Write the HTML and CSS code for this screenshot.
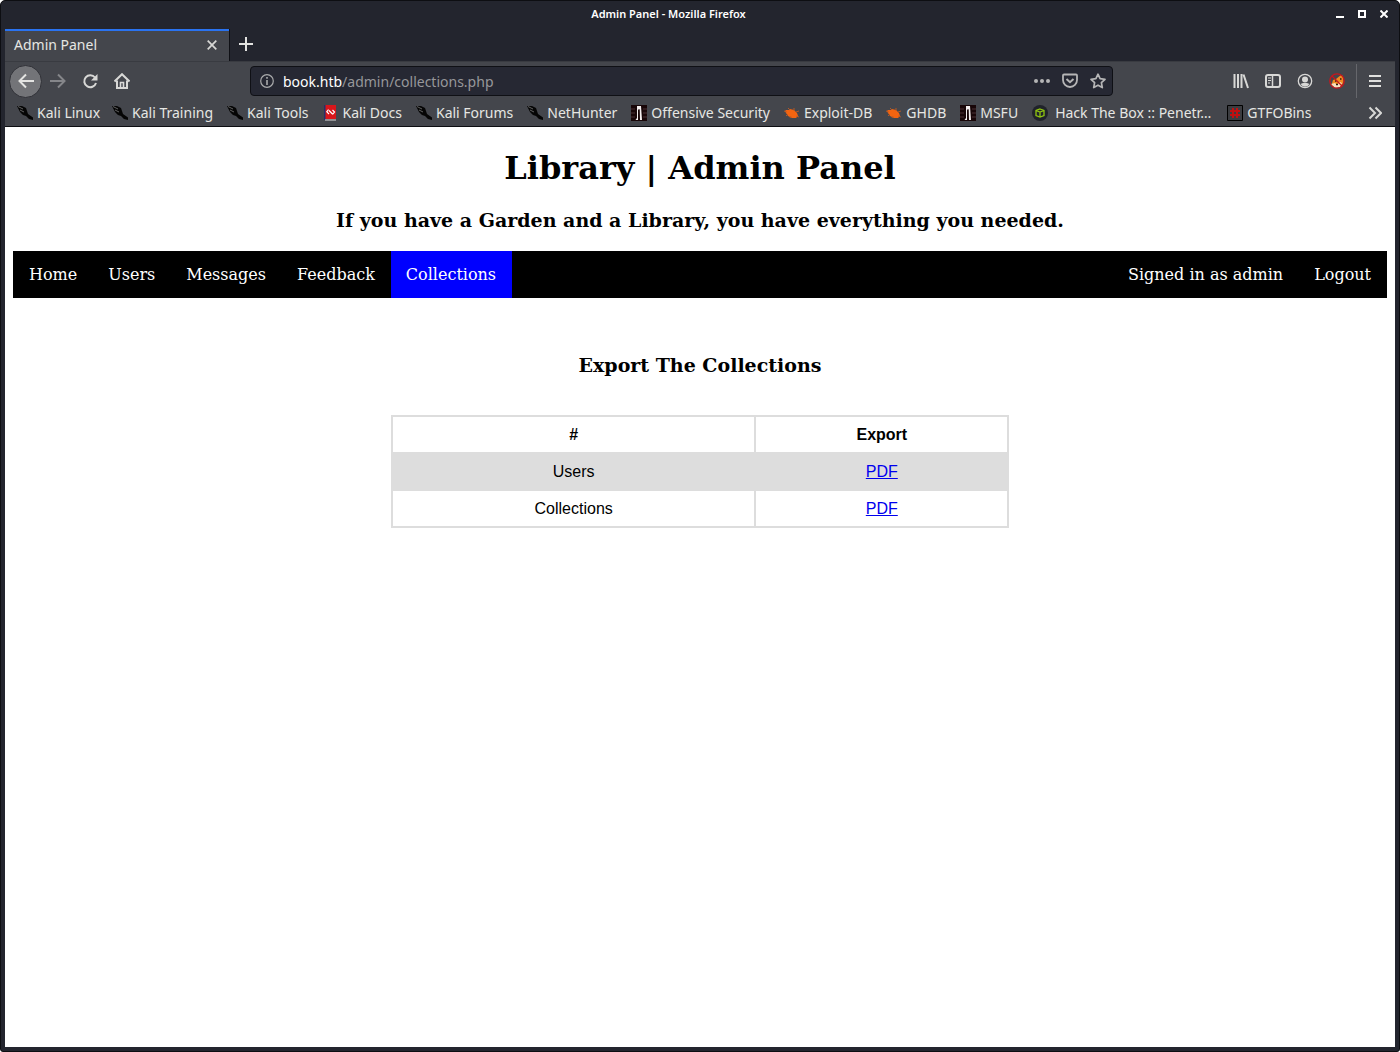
FILE: index.html
```html
<!DOCTYPE html>
<html lang="en">
<head>
<meta charset="utf-8">
<title>Admin Panel</title>
<link rel="stylesheet" href="styles.css">
</head>
<body>
<svg class="defs" aria-hidden="true">
  <symbol id="kali" viewBox="0 0 16 16"><path d="M0 1l5 0 4 2 1 3 1 3 5 3.500V15l-4-1-3-3-3-1-3-3z" fill="#050505"/><path d="M1 1.500l5 2.500M3 5l4 2" stroke="#8a8a8a" stroke-width=".7"/></symbol>
  <symbol id="docs" viewBox="0 0 16 16"><path d="M2 0h2v15H2z" fill="#26306b"/><path d="M3.500 0H14v14H3.500z" fill="#d9161b"/><path d="M3 14.500h11v1H3z" fill="#ddd"/><path d="M6.500 4.500L4.800 6.800 7 9M10.500 5l2 2-2 2.500M7 5.500l3.500 3.500" fill="none" stroke="#fff" stroke-width="1.200"/></symbol>
  <symbol id="offsec" viewBox="0 0 16 16"><path d="M0 0h16v16H0z" fill="#180608"/><path d="M0 4h4M0 8h4M0 12h4M12 4h4M12 8h4M12 12h4" stroke="#4a3034"/><path d="M6 1h4l1 14H9L8.500 5 7 5v10H4.500l1.500-2z" fill="#f4eeee"/><path d="M7.500 4h1v11h-1z" fill="#180608"/></symbol>
  <symbol id="bug" viewBox="0 0 16 16"><path d="M1 6l1-1 3 0 1-1 4 1 3 3 1 3-2 2-4 0-4-2-2-3z" fill="#f36410"/><path d="M4 3l2 2M10 3l0 3M12 7l3-1M3 7L0 6M4 9l-2 2M7 11l-1 2M12 11l3 1" stroke="#c05a22" stroke-width=".9"/></symbol>
  <symbol id="htb" viewBox="0 0 16 16"><circle cx="8" cy="8" r="8" fill="#20232a"/><path d="M8 4l4 1.500v5L8 12l-4-1.500v-5zM4 5.500L8 7l4-1.500M8 7v5" fill="none" stroke="#8fc411" stroke-width="1.300"/></symbol>
  <symbol id="gtfo" viewBox="0 0 16 16"><path d="M.5.5h15v15H.5z" fill="#3b3c40" stroke="#000"/><path d="M6 3v10M10 3v10M3 6h10M3 10h10" stroke="#c01010" stroke-width="2"/></symbol>
</svg>
<div class="window">
  <header class="titlebar">
    <span class="caption">Admin Panel - Mozilla Firefox</span>
    <div class="controls">
      <button aria-label="Minimize"><svg width="8" height="8"><path d="M0 6h8v2H0z" fill="#fff"/></svg></button>
      <button aria-label="Maximize"><svg width="8" height="8"><path d="M1 1h6v6H1z" fill="none" stroke="#fff" stroke-width="2"/></svg></button>
      <button aria-label="Close window"><svg width="8" height="8"><path d="M.5.5l7 7M7.500.5l-7 7" stroke="#fff" stroke-width="2"/></svg></button>
    </div>
  </header>
  <div class="tabs">
    <div class="tab"><span>Admin Panel</span><button aria-label="Close tab"><svg width="10" height="10"><path d="M.7.700l8.600 8.600M9.300.700L.700 9.300" stroke="#d8d8d6" stroke-width="1.700"/></svg></button></div>
    <button class="newtab" aria-label="New tab"><svg width="14" height="14"><path d="M7 0v14M0 7h14" stroke="#e2e2e0" stroke-width="2"/></svg></button>
  </div>
  <div class="toolbar">
    <div class="history">
      <button class="back" aria-label="Back"><svg width="16" height="16"><path d="M16 8H1.500M8 1.500L1.500 8 8 14.500" fill="none" stroke="#e4e4e2" stroke-width="2"/></svg></button>
      <button aria-label="Forward"><svg width="16" height="16"><path d="M0 8h14.500M8 1.500L14.500 8 8 14.500" fill="none" stroke="#85868a" stroke-width="2"/></svg></button>
      <button aria-label="Reload"><svg width="16" height="16"><path d="M13 4.500A6 6 0 1 0 14 10" fill="none" stroke="#d8d8d6" stroke-width="2"/><path d="M15.500 1v6.500H9z" fill="#d8d8d6"/></svg></button>
      <button aria-label="Home"><svg width="16" height="16"><path d="M.5 8.500L8 1.200l7.500 7.300" fill="none" stroke="#d8d8d6" stroke-width="2"/><path d="M3 7.500V15h10V7.500" fill="none" stroke="#d8d8d6" stroke-width="2"/><path d="M6.500 15V9.500h3V15" fill="none" stroke="#d8d8d6" stroke-width="1.600"/></svg></button>
    </div>
    <div class="urlbar">
      <svg width="14" height="14"><circle cx="7" cy="7" r="6.300" fill="none" stroke="#aaabac" stroke-width="1.200"/><path d="M6.200 6h1.600v5H6.200zM6.200 3h1.600v1.700H6.200z" fill="#aaabac"/></svg>
      <span class="address"><b>book.htb</b>/admin/collections.php</span>
      <button aria-label="Page actions"><svg width="16" height="16"><g fill="#b5b5b6"><circle cx="2" cy="8" r="2"/><circle cx="8" cy="8" r="2"/><circle cx="14" cy="8" r="2"/></g></svg></button>
      <button aria-label="Save to Pocket"><svg width="16" height="16"><path d="M2 1.500h12q1 0 1 1V7a7 7 0 0 1-14 0V2.500q0-1 1-1z" fill="none" stroke="#b5b5b6" stroke-width="1.800"/><path d="M4.500 6L8 9.200 11.500 6" fill="none" stroke="#b5b5b6" stroke-width="2"/></svg></button>
      <button aria-label="Bookmark this page"><svg width="16" height="16"><path d="M8 1.200l2.100 4.500 4.900.600-3.600 3.400.900 4.900L8 12.200l-4.300 2.400.900-4.900L1 6.300l4.900-.600z" fill="none" stroke="#b5b5b6" stroke-width="1.700" stroke-linejoin="round"/></svg></button>
    </div>
    <div class="tools">
      <button aria-label="Library"><svg width="16" height="16"><path d="M1.500 1v14M5 1v14M8.500 1v14M10.500 1.500L15 15" stroke="#d8d8d6" stroke-width="2"/></svg></button>
      <button aria-label="Sidebars"><svg width="16" height="16"><rect x="1" y="2" width="14" height="12" rx="2" fill="none" stroke="#d8d8d6" stroke-width="2"/><path d="M7.500 2v12" stroke="#d8d8d6" stroke-width="1.500"/><path d="M3 5h3M3 7.500h3M3 10h2" stroke="#d8d8d6"/></svg></button>
      <button aria-label="Account"><svg width="16" height="16"><circle cx="8" cy="8" r="6.700" fill="none" stroke="#d8d8d6" stroke-width="1.300"/><circle cx="8" cy="6.500" r="3" fill="#d8d8d6"/><path d="M3.500 11q2-1 3-1h3q1 0 3 1-1.500 2.700-4.500 2.700T3.500 11z" fill="#d8d8d6"/></svg></button>
      <button aria-label="FoxyProxy"><svg width="16" height="16"><path d="M4 7l3-1 5-4 2 1 .5 6-2 4-5 1.500-5-2.500z" fill="#f08a20"/><path d="M2 11l4-1 2 2 3-3 2 1-2 4-5 1z" fill="#f5e1c0"/><path d="M6 8h1.500M11 6h1.500M7 11.500h2" stroke="#301a10" stroke-width="1.500"/><circle cx="8" cy="8" r="7.200" fill="none" stroke="#c9151c" stroke-width="1.300"/><path d="M3 3l10 10" stroke="#c9151c" stroke-width="1.300"/></svg></button>
      <button class="menu" aria-label="Menu"><svg width="16" height="16"><path d="M2 3h12M2 8h12M2 13h12" stroke="#e0e0de" stroke-width="2"/></svg></button>
    </div>
  </div>
  <nav class="bookmarks" aria-label="Bookmarks">
    <a href="#"><svg><use href="#kali"/></svg>Kali Linux</a>
    <a href="#"><svg><use href="#kali"/></svg>Kali Training</a>
    <a href="#"><svg><use href="#kali"/></svg>Kali Tools</a>
    <a href="#"><svg><use href="#docs"/></svg>Kali Docs</a>
    <a href="#"><svg><use href="#kali"/></svg>Kali Forums</a>
    <a href="#"><svg><use href="#kali"/></svg>NetHunter</a>
    <a href="#"><svg><use href="#offsec"/></svg>Offensive Security</a>
    <a href="#"><svg><use href="#bug"/></svg>Exploit-DB</a>
    <a href="#"><svg><use href="#bug"/></svg>GHDB</a>
    <a href="#"><svg><use href="#offsec"/></svg>MSFU</a>
    <a href="#" class="truncated"><svg><use href="#htb"/></svg>Hack The Box :: Penetr…</a>
    <a href="#"><svg><use href="#gtfo"/></svg>GTFOBins</a>
    <button aria-label="More bookmarks"><svg width="14" height="14"><path d="M1.500 1.500L7 7l-5.500 5.500M7.500 1.500L13 7l-5.500 5.500" fill="none" stroke="#d8d8d6" stroke-width="2"/></svg></button>
  </nav>
  <main class="page">
    <h1>Library | Admin Panel</h1>
    <h3>If you have a Garden and a Library, you have everything you needed.</h3>
    <nav class="menubar" aria-label="Library">
      <a href="#">Home</a>
      <a href="#">Users</a>
      <a href="#">Messages</a>
      <a href="#">Feedback</a>
      <a href="#" class="active">Collections</a>
      <a href="#" class="account">Signed in as admin</a>
      <a href="#">Logout</a>
    </nav>
    <h3 class="section">Export The Collections</h3>
    <table>
      <thead><tr><th class="name">#</th><th>Export</th></tr></thead>
      <tbody>
        <tr><td>Users</td><td><a href="#">PDF</a></td></tr>
        <tr><td>Collections</td><td><a href="#">PDF</a></td></tr>
      </tbody>
    </table>
  </main>
</div>
</body>
</html>
```
FILE: styles.css
```css
* { box-sizing: border-box; }
body { margin: 0; background: #fff; }
.defs { position: absolute; width: 0; height: 0; }
button {
  display: flex; align-items: center; justify-content: center;
  padding: 0; border: 0; background: none;
}
svg { display: block; flex: none; }

.window {
  display: flex; flex-direction: column;
  min-height: 100vh;
  padding: 0 4px 4px;
  border: 1px solid #0d0e12;
  border-radius: 5px 5px 3px 3px;
  background: #23252e;
  font-family: "Noto Sans", sans-serif;
  font-size: 14px;
  color: #e6e6e3;
}
.titlebar {
  display: grid; grid-template-columns: 1fr auto 1fr;
  align-items: center;
  height: 28px;
  padding: 0 7px 3px 0;
}
.caption { grid-column: 2; padding-right: 56px; font-size: 11px; font-weight: 600; color: #fff; }
.controls { display: flex; justify-content: flex-end; gap: 14px; }

.tabs { display: flex; height: 32px; }
.tab {
  display: flex; align-items: center; justify-content: space-between;
  width: 224px;
  padding: 0 12px 3px 9px;
  border-top: 2px solid #2a73f0;
  background: #44464c;
}
.newtab {
  width: 33px;
  padding-bottom: 2px;
  border-left: 1px solid #0f1015;
}
.toolbar {
  display: flex; align-items: center;
  height: 40px;
  padding: 0 2px 0 4px;
  background: #44464c;
  box-shadow: inset 0 1px #393b41;
}
.history { display: flex; align-items: center; flex: 1 1 241px; }
.history button { width: 32px; height: 32px; }
.history .back { width: 33px; height: 33px; border: 1px solid #303137; border-radius: 50%; background: #737478; }
.urlbar {
  display: flex; align-items: center; gap: 12px;
  flex: 6 1 863px;
  height: 30px;
  padding: 0 6px 0 9px;
  border: 1px solid #0f1015;
  border-radius: 4px;
  background: #262833;
}
.address { flex: 1; margin-left: -3px; color: #96979a; }
.address b { font-weight: 400; color: #fff; }
.tools { display: flex; flex: 1 1 280px; justify-content: flex-end; }
.tools button { width: 32px; height: 34px; }
.tools .menu { width: 37px; border-left: 1px solid #66676c; margin-left: 3px; }

.bookmarks {
  display: flex; align-items: center; gap: 12px;
  height: 26px;
  padding: 0 13px 2px 12px;
  border-bottom: 1px solid #0d0e12;
  background: #44464c;
}
.bookmarks a {
  display: flex; align-items: center; gap: 4px;
  color: inherit; text-decoration: none; white-space: nowrap;
}
.bookmarks a + a { padding-right: 2px; }
.bookmarks .truncated { gap: 7px; }
.bookmarks a + .truncated { padding-right: 4px; }
.bookmarks a svg { width: 16px; height: 16px; }
.bookmarks button { margin-left: auto; }

.page {
  flex: 1;
  padding: 1px 8px 8px;
  background: #fff;
  color: #000;
  font-family: "DejaVu Serif", serif;
  font-size: 16px;
  text-align: center;
}
.page h1 { margin: 21px 0 22px; }
.page h3 { margin: 20px 0; font-size: 19px; }
.menubar { display: flex; background: #000; }
.menubar a { padding: 14px 16px; color: #fff; text-decoration: none; }
.menubar a + a { padding-left: 15px; }
.menubar .active { background: #00f; }
.menubar .account { margin-left: auto; }
.page .section { margin: 56px 0 39px; }
table {
  width: 45%;
  margin: 0 auto;
  border-collapse: collapse;
  font-family: "Liberation Sans", sans-serif;
  line-height: 19px;
}
th, td { padding: 8px; border: 2px solid #ddd; }
.name { width: 59%; }
tbody tr:nth-child(odd) { background: #ddd; }
td a { color: #00e; }
```
